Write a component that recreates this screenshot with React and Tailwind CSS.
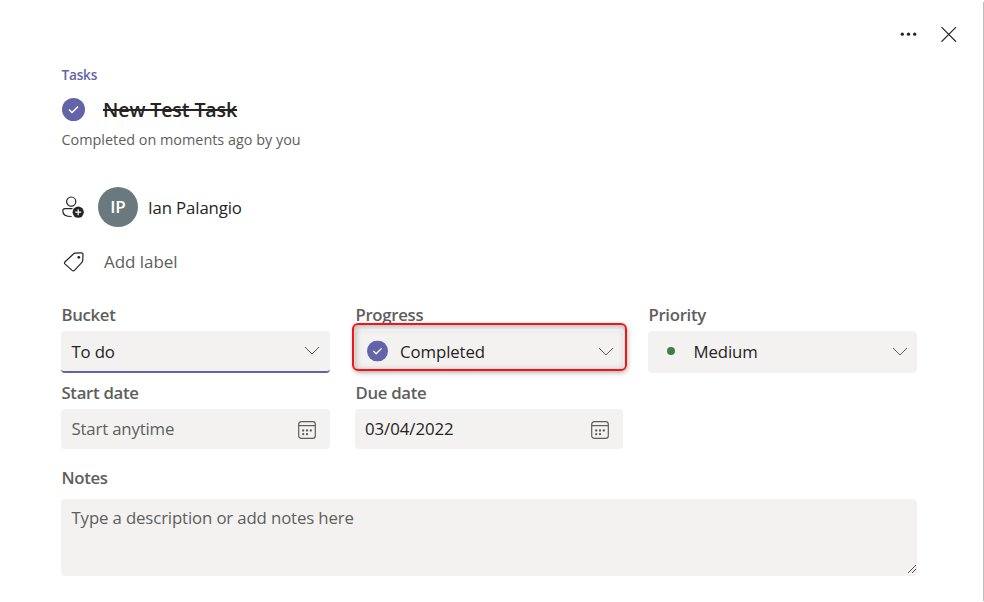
function CheckCircle({ className }) {
  return (
    <svg viewBox="0 0 24 24" className={className} fill="none">
      <circle cx="12" cy="12" r="12" fill="#6264a7" />
      <path d="M7.3 12.1l3.1 3.1 6.3-6.2" stroke="#fff" strokeWidth="1.5" />
    </svg>
  );
}

function Chevron() {
  return (
    <svg viewBox="0 0 16 9" className="h-[9px] w-4 shrink-0 -translate-y-px" fill="none" stroke="#605e5c" strokeWidth="1">
      <path d="M1 1L8 8L15 1" />
    </svg>
  );
}

function CalendarIcon() {
  return (
    <svg viewBox="0 0 18 18" className="h-[18px] w-[18px] shrink-0 translate-y-px" fill="none" stroke="#605e5c" strokeWidth="1.2">
      <rect x="0.7" y="0.7" width="16.6" height="16.6" rx="2.6" />
      <path d="M0.7 4.6h16.6" />
      <g fill="#605e5c" stroke="none">
        <circle cx="5.2" cy="9.5" r="1.15" />
        <circle cx="9" cy="9.5" r="1.15" />
        <circle cx="12.8" cy="9.5" r="1.15" />
        <circle cx="5.2" cy="13.2" r="1.15" />
        <circle cx="9" cy="13.2" r="1.15" />
      </g>
    </svg>
  );
}

function AssignIcon() {
  return (
    <svg viewBox="0 0 22 22" className="h-[22px] w-[22px]" fill="none" stroke="#252423" strokeWidth="1.2">
      <circle cx="9.2" cy="5.6" r="4.6" />
      <path d="M10.5 12.7H3Q0.8 12.7 0.8 14.9C0.8 18.7 4.2 20.5 9.6 20.5" />
      <circle cx="16.2" cy="16.2" r="5.6" fill="#252423" stroke="none" />
      <path d="M16.2 13.2v6M13.2 16.2h6" stroke="#fff" />
    </svg>
  );
}

function TagIcon() {
  return (
    <svg viewBox="0 0 22 22" className="h-[22px] w-[22px]" fill="none" stroke="#252423" strokeWidth="1.2">
      <path d="M12 2.2L17.8 1.8Q20.1 1.7 20 3.9L19.7 9.6Q19.6 10.6 18.9 11.3L11.5 19.4Q10.3 20.6 9.1 19.4L2.1 13.1Q0.9 11.9 2.1 10.7L10.4 3Q11.1 2.3 12 2.2Z" />
      <circle cx="15.8" cy="6.3" r="1.4" fill="#252423" stroke="none" />
    </svg>
  );
}

function Label({ children }) {
  return <div className="h-5 pl-[0.4px] text-[16.8px] leading-5 font-semibold tracking-[-0.018em] text-[#605e5c]">{children}</div>;
}

export default function App() {
  return (
    <div className="h-[602px] w-[984px] bg-white pt-[2px] pb-px font-['Open_Sans','Noto_Sans',sans-serif] whitespace-nowrap text-[#252423]">
      <div className="flex h-[599px] flex-col border-r border-[#bdbdbd] pr-[66px] pl-[61px]">
        <header className="-mr-10 flex h-16 items-center justify-end gap-6">
          <svg viewBox="0 0 17 4" className="h-1 w-[17px]" fill="#252423">
            <circle cx="2.3" cy="2.2" r="1.65" />
            <circle cx="8.5" cy="2.2" r="1.65" />
            <circle cx="14.7" cy="2.2" r="1.65" />
          </svg>
          <svg viewBox="0 0 16 16" className="h-4 w-4" stroke="#252423" strokeWidth="1.2">
            <path d="M0.5 1.2L15 15.7M15 1.2L0.5 15.7" />
          </svg>
        </header>

        <div className="-mt-px h-5 pl-[0.5px] text-[13.6px] leading-5 font-semibold tracking-[-0.015em] text-[#6264a7]">Tasks</div>
        <div className="mt-[10px] flex h-7 items-center">
          <CheckCircle className="ml-px h-[23px] w-[23px]" />
          <h1 className="ml-[18px] translate-y-px text-[19.6px] leading-7 font-semibold tracking-[-0.006em] line-through decoration-2">New Test Task</h1>
        </div>
        <div className="mt-[7px] h-5 pl-[0.5px] text-[14.4px] leading-5 text-[#605e5c]">Completed on moments ago by you</div>

        <div className="mt-[37px] flex h-10 items-center">
          <span className="ml-px"><AssignIcon /></span>
          <div className="ml-[14px] flex h-10 w-10 items-center justify-center rounded-full bg-[#69797e] text-[17px] font-semibold text-white">IP</div>
          <span className="ml-[10px] translate-y-px text-[16.8px] tracking-[-0.008em]">Ian Palangio</span>
        </div>
        <div className="mt-[23px] flex h-6 items-center">
          <span className="ml-[2px]"><TagIcon /></span>
          <span className="ml-[19px] text-[17px] leading-6 tracking-[-0.003em] text-[#605e5c]">Add label</span>
        </div>

        <div className="mt-[31px] grid grid-cols-[269px_268px_269px] gap-x-[25px]">
          <div>
            <Label>Bucket</Label>
            <div className="mt-[6px] flex h-[42px] items-center justify-between rounded border-b-2 border-[#6264a7] bg-[#f3f2f1] pr-[10px] pl-[10.5px] text-[16.8px] tracking-[-0.01em]">
              <span className="translate-y-px">To do</span>
              <Chevron />
            </div>
          </div>
          <div>
            <Label>Progress</Label>
            <div className="relative mt-[6px] flex h-[42px] items-center rounded bg-[#f3f2f1] pr-[9px] pl-3 text-[16.8px] tracking-[-0.005em]">
              <CheckCircle className="h-[21px] w-[21px] -translate-y-[1.5px]" />
              <span className="ml-[12px] flex-1">Completed</span>
              <Chevron />
              <div className="absolute -top-[8px] -right-1 -left-[3.5px] h-[48px] rounded-[6px] border-2 border-[#f51414] shadow-[1px_2px_5px_rgba(0,0,0,0.25),inset_1px_2px_7px_rgba(0,0,0,0.3)]" />
            </div>
          </div>
          <div>
            <Label>Priority</Label>
            <div className="mt-[6px] flex h-[42px] items-center rounded bg-[#f3f2f1] pr-[9.5px] pl-[18.5px] text-[16.8px] tracking-[-0.008em]">
              <span className="h-2 w-2 -translate-y-px rounded-full bg-[#3f8140]" />
              <span className="ml-[19px] flex-1">Medium</span>
              <Chevron />
            </div>
          </div>
          <div className="mt-[10px]">
            <Label>Start date</Label>
            <div className="mt-[6px] flex h-10 items-center justify-between rounded bg-[#f3f2f1] pr-[14.5px] pl-[10.5px] text-[16.8px] tracking-[-0.01em] text-[#605e5c]">
              <span>Start anytime</span>
              <CalendarIcon />
            </div>
          </div>
          <div className="mt-[10px]">
            <Label>Due date</Label>
            <div className="mt-[6px] flex h-10 items-center justify-between rounded bg-[#f3f2f1] pr-[14.5px] pl-[10px] text-[16.8px] tracking-[-0.003em]">
              <span>03/04/2022</span>
              <CalendarIcon />
            </div>
          </div>
        </div>

        <div className="mt-[19px]">
          <Label>Notes</Label>
        </div>
        <div className="mt-[11px] flex h-[77px] justify-between rounded bg-[#f3f2f1] pt-[7px] pl-[10.5px] text-[16.8px] leading-6 tracking-[-0.008em] text-[#605e5c]">
          <span>Type a description or add notes here</span>
          <svg viewBox="0 0 10 10" className="mb-[2px] h-[10px] w-[10px] self-end" stroke="#555" strokeWidth="1">
            <path d="M1 9L9 1M5 9L9 5" />
          </svg>
        </div>
      </div>
    </div>
  );
}
